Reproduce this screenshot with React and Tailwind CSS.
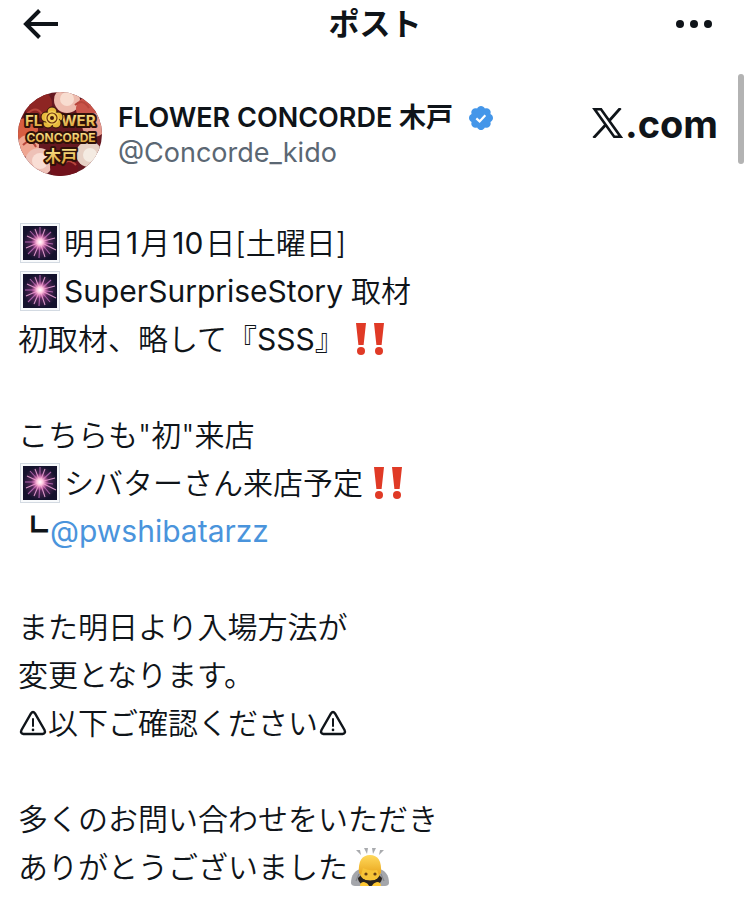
const SPARKS = [
  [20, 4], [25, 6], [31, 9], [35, 15], [33, 21], [36, 27], [30, 31], [25, 34],
  [19, 35], [14, 33], [8, 31], [6, 25], [5, 19], [7, 13], [10, 8], [15, 6],
];

/* ---------- Emoji ---------- */

function Sparkler() {
  return (
    <svg viewBox="0 0 40 40" role="img" aria-label="🎇" className="mr-1 ml-0.5 h-10 w-10 shrink-0">
      <defs>
        <radialGradient id="sky">
          <stop offset="0" stopColor="#a83f92" />
          <stop offset="0.45" stopColor="#562859" />
          <stop offset="1" stopColor="#14122d" />
        </radialGradient>
        <radialGradient id="core">
          <stop offset="0" stopColor="#fff" />
          <stop offset="0.35" stopColor="#ffc5df" />
          <stop offset="1" stopColor="#e75bb0" stopOpacity="0" />
        </radialGradient>
      </defs>
      <rect x="0.5" y="0.5" width="39" height="39" fill="#f8fafc" stroke="#d3dae2" />
      <rect x="3" y="3" width="34" height="34" fill="#14122d" />
      <circle cx="20" cy="20" r="17" fill="url(#sky)" />
      {SPARKS.map(([x, y], i) => (
        <line key={i} x1="20" y1="19" x2={x} y2={y} stroke={i % 2 ? "#e9a1d6" : "#b767b4"} strokeWidth="1.1" opacity="0.9" />
      ))}
      <circle cx="20" cy="19" r="9" fill="url(#core)" />
    </svg>
  );
}

function DoubleBang() {
  return (
    <svg viewBox="0 0 40 40" role="img" aria-label="‼️" className="ml-1.5 h-10 w-10 shrink-0" fill="#e03a26">
      <path d="M5 4h10l-2.400 22h-5.200zM23 4h10l-2.400 22h-5.200z" />
      <circle cx="10" cy="32" r="4" />
      <circle cx="28" cy="32" r="4" />
    </svg>
  );
}

function Bowing() {
  return (
    <svg viewBox="0 0 40 40" role="img" aria-label="🙇" className="ml-0.5 h-10 w-10 shrink-0">
      <defs>
        <linearGradient id="hair" x2="0" y2="1">
          <stop offset="0" stopColor="#ffd95c" />
          <stop offset="1" stopColor="#e9a51c" />
        </linearGradient>
      </defs>
      <path d="M6 3l4 0 1 5zM14 1h4l-1 6zM22 1h4l-3 6zM34 3l-4 0-1 5z" fill="#a9abae" />
      <path d="M1 36c0-8 4-13 10-14h18c6 1 10 6 10 14 0 2-2 3-4 3H5c-2 0-4-1-4-3z" fill="#a4a6ab" />
      <path d="M9 27l-3 7M31 27l3 7" stroke="#85878c" strokeWidth="1.200" />
      <path d="M8 31c0 5 5 8 12 8s12-3 12-8l-3-3H11z" fill="#27221f" />
      <ellipse cx="20" cy="26" rx="10" ry="8" fill="#f7c437" />
      <path d="M9 26c-1-12 3-18 11-18s12 6 11 18l-2 2-2-5c-5 1-10 0-14-2l-2 7z" fill="url(#hair)" />
      <circle cx="16" cy="27" r="1.600" fill="#674015" />
      <circle cx="25" cy="27" r="1.600" fill="#674015" />
      <path d="M11 31q9 5 19 0-1 6-9 6t-10-6z" fill="#27221f" />
      <path d="M10 39q0-4 4-4 4 1 5 4zM31 39q0-4-4-4-4 1-5 4z" fill="#ffc832" />
    </svg>
  );
}

function Warning() {
  return (
    <svg viewBox="0 0 30 30" role="img" aria-label="⚠︎" className="h-[30px] w-[30px] shrink-0" fill="none" stroke="#0f1419" strokeWidth="2.400" strokeLinecap="round">
      <path d="M13 5.500Q15 2.500 17 5.500L26.500 22Q28 25.500 24.500 26H5.500Q2 25.500 3.500 22Z" />
      <path d="M15 11v7" strokeWidth="2" />
      <path d="M15 21.800v.1" strokeWidth="2.600" />
    </svg>
  );
}

/* ---------- Header pieces ---------- */

function Avatar() {
  return (
    <svg viewBox="0 0 84 84" role="img" aria-label="FLOWER CONCORDE 木戸" className="h-[84px] w-[84px] shrink-0 rounded-full">
      <defs>
        <linearGradient id="gold" x2="0" y2="1">
          <stop offset="0" stopColor="#fff09c" />
          <stop offset="1" stopColor="#d99a2b" />
        </linearGradient>
      </defs>
      <rect width="84" height="84" fill="#651820" />
      <circle cx="20" cy="12" r="14" fill="#8e2523" />
      <circle cx="49" cy="8" r="13" fill="#eebcae" />
      <circle cx="49" cy="7" r="7" fill="#f8ddd0" />
      <circle cx="70" cy="17" r="12" fill="#c95449" />
      <circle cx="76" cy="33" r="12" fill="#e89a8d" />
      <circle cx="8" cy="38" r="12" fill="#d75e42" />
      <circle cx="10" cy="54" r="11" fill="#efa692" />
      <circle cx="21" cy="70" r="14" fill="#eec1b7" />
      <circle cx="22" cy="69" r="8" fill="#f9ded5" />
      <circle cx="46" cy="75" r="14" fill="#71121c" />
      <circle cx="71" cy="62" r="13" fill="#e7d1c5" />
      <circle cx="72" cy="63" r="7" fill="#f4ebe2" />
      <path d="M9 22q9-9 15 0M57 13q8-7 14 3M5 53q8-8 13 2M58 73q-8-8-13 0" stroke="#b8463c" strokeWidth="2" fill="none" />
      <g fill="url(#gold)" stroke="#2f1109" strokeWidth="4" strokeLinejoin="round" paintOrder="stroke" fontWeight="700">
        <text x="7" y="34" fontSize="15">FL</text>
        <text x="43" y="34" fontSize="15">WER</text>
        <text x="43" y="50" fontSize="12" textAnchor="middle">CONCORDE</text>
        <text x="43" y="70" fontSize="16" textAnchor="middle">木戸</text>
      </g>
      <g stroke="#2f1109" strokeWidth="1" fill="#e8b93c">
        <circle cx="34" cy="20" r="5" />
        <circle cx="40" cy="25" r="5" />
        <circle cx="38" cy="31" r="5" />
        <circle cx="30" cy="31" r="5" />
        <circle cx="28" cy="25" r="5" />
      </g>
      <circle cx="34" cy="26" r="7" fill="#f4cf57" />
      <circle cx="34" cy="26" r="5" fill="none" stroke="#6b300f" strokeWidth="1.200" />
      <circle cx="34" cy="26" r="2" fill="#471b0b" />
    </svg>
  );
}

function VerifiedBadge() {
  return (
    <svg viewBox="1.750 1.750 20.500 20.500" role="img" aria-label="認証済みアカウント" className="ml-4 h-6 w-6 shrink-0">
      <path
        fill="#4496e9"
        d="M22.250 12c0-1.430-.880-2.670-2.190-3.340.460-1.390.200-2.900-.810-3.910s-2.520-1.270-3.910-.810c-.660-1.310-1.910-2.190-3.340-2.190s-2.670.880-3.330 2.190c-1.400-.460-2.910-.200-3.920.810s-1.260 2.520-.800 3.910c-1.310.670-2.200 1.910-2.200 3.340s.890 2.670 2.200 3.340c-.460 1.390-.210 2.900.800 3.910s2.520 1.260 3.910.810c.670 1.310 1.910 2.190 3.340 2.190s2.680-.880 3.340-2.190c1.390.450 2.900.200 3.910-.810s1.270-2.520.810-3.910c1.310-.670 2.190-1.910 2.190-3.340z"
      />
      <path d="M8 12.300l2.800 2.600 4.900-5.300" fill="none" stroke="#fff" strokeWidth="1.900" />
    </svg>
  );
}

function XLogo() {
  return (
    <svg viewBox="0 0 31 30" aria-hidden="true" className="mr-0.5 h-[30px] w-[31px]" fill="none" stroke="#0f1419" strokeWidth="2.600">
      <path d="M2.600 1.300h6.400L28.600 28.700h-6.400z" />
      <path d="M28.500 0L17 13M13.500 17L1.500 30" strokeWidth="2.800" />
    </svg>
  );
}

function Line({ children }) {
  return <p className="flex min-h-12 items-center whitespace-pre">{children}</p>;
}

export default function App() {
  return (
    <div className="relative bg-white pb-5 font-['Inter','Noto_Sans_CJK_JP',sans-serif] text-[#0f1419]" lang="ja">
      <header className="grid grid-cols-3 items-center px-4">
        <button type="button" aria-label="戻る" className="justify-self-start">
          <svg viewBox="0 0 24 24" className="h-12 w-12" fill="currentColor">
            <path d="M7.414 13l5.043 5.040-1.414 1.420L3.586 12l7.457-7.460 1.414 1.420L7.414 11H21v2H7.414z" />
          </svg>
        </button>
        <h1 className="justify-self-center text-[31px] leading-12 font-bold">ポスト</h1>
        <button type="button" aria-label="その他" className="mr-4 justify-self-end">
          <svg viewBox="0 0 48 48" className="h-12 w-12" fill="currentColor">
            <circle cx="10" cy="24" r="4" />
            <circle cx="24" cy="24" r="4" />
            <circle cx="38" cy="24" r="4" />
          </svg>
        </button>
      </header>

      <main>
        <div className="flex items-start justify-between pt-11 pr-8 pl-[18px]">
          <div className="flex items-center gap-4">
            <Avatar />
            <div className="pt-0.5 text-[27px] leading-[35px]">
              <div className="flex items-center font-semibold">
                FLOWER CONCORDE 木戸
                <VerifiedBadge />
              </div>
              <div className="text-[#5b6773]">@Concorde_kido</div>
            </div>
          </div>
          <a href="https://x.com" aria-label="X.com" className="flex items-baseline pt-3">
            <XLogo />
            <span className="text-[38px] leading-10 font-bold">.com</span>
          </a>
        </div>

        <article className="px-[18px] pt-[43px] text-[30px] leading-12 font-[350]">
          <Line><Sparkler />明日<span className="mx-0.5 font-normal">1</span>月<span className="mx-0.5 font-normal">10</span>日[土曜日]</Line>
          <Line><Sparkler /><span className="mr-2 font-normal">SuperSurpriseStory</span>取材</Line>
          <Line>初取材、略して『<span className="font-normal">SSS</span>』<DoubleBang /></Line>
          <Line />
          <Line>こちらも"初"来店</Line>
          <Line><Sparkler />シバターさん来店予定<DoubleBang /></Line>
          <Line>┗<a href="https://x.com/pwshibatarzz" className="ml-0.5 font-normal text-[#4a94dc]">@pwshibatarzz</a></Line>
          <Line />
          <Line>また明日より入場方法が</Line>
          <Line>変更となります。</Line>
          <Line><Warning />以下ご確認ください<Warning /></Line>
          <Line />
          <Line>多くのお問い合わせをいただき</Line>
          <Line>ありがとうございました<Bowing /></Line>
        </article>
      </main>

      <div className="absolute top-[74px] right-[6px] h-[90px] w-[6px] rounded-full bg-[#b3b3b3]" />
    </div>
  );
}
